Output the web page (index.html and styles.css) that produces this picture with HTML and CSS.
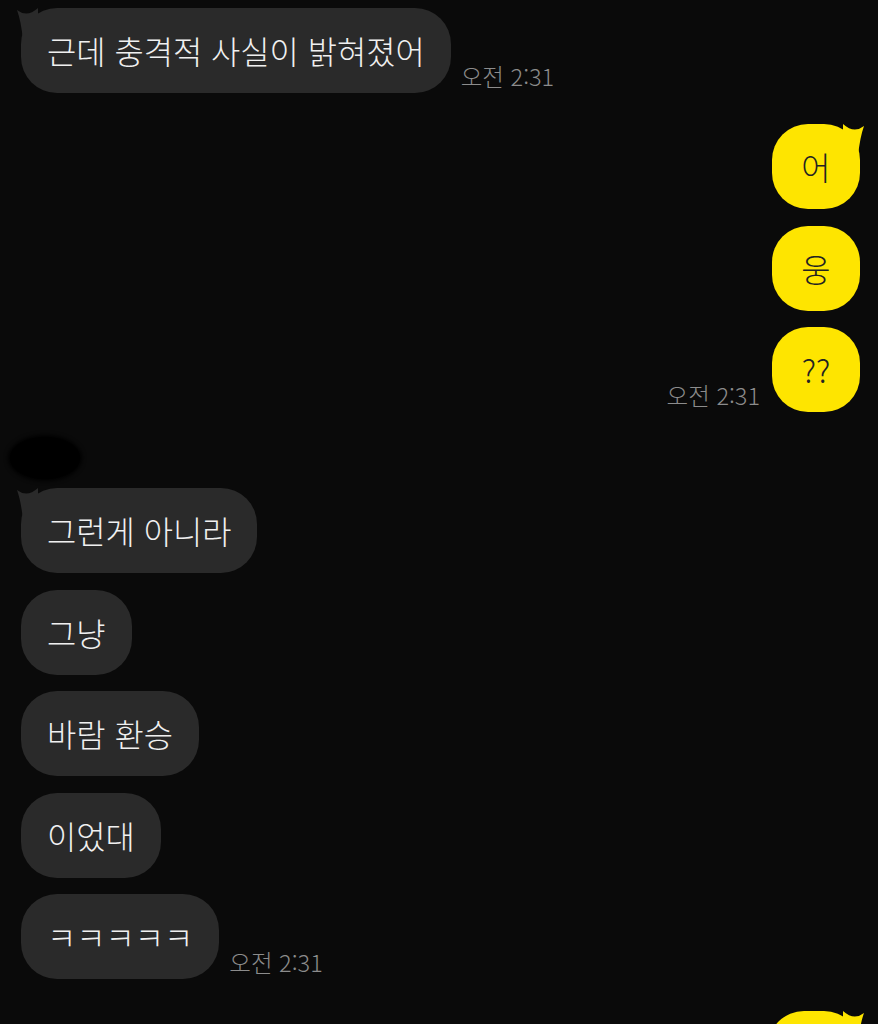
FILE: index.html
```html
<!DOCTYPE html>
<html lang="ko">
<head>
  <meta charset="UTF-8">
  <title>채팅</title>
  <link rel="stylesheet" href="styles.css">
</head>
<body>

  <div class="chat">

    <div class="row left">
      <div class="bubble gray">
        <svg class="tail" width="24" height="32" viewBox="0 0 24 32"><path d="M1 2 Q11 10 22 0 L22 32 L7 32 Q5 13 1 2 Z"/></svg>
        근데 충격적 사실이 밝혀졌어
      </div>
      <span class="time">오전 2:31</span>
    </div>

    <div class="group right first">
      <div class="row right">
        <div class="bubble yellow">
          <svg class="tail" width="24" height="32" viewBox="0 0 24 32"><path d="M23 2 Q13 10 2 0 L2 32 L17 32 Q19 13 23 2 Z"/></svg>
          어
        </div>
      </div>
      <div class="row right">
        <div class="bubble yellow">웅</div>
      </div>
      <div class="row right">
        <span class="time">오전 2:31</span>
        <div class="bubble yellow">??</div>
      </div>
    </div>

    <div class="sender">
      <div class="name-blur"></div>
    </div>

    <div class="group">
      <div class="row left">
        <div class="bubble gray">
          <svg class="tail" width="24" height="32" viewBox="0 0 24 32"><path d="M1 2 Q11 10 22 0 L22 32 L7 32 Q5 13 1 2 Z"/></svg>
          그런게 아니라
        </div>
      </div>
      <div class="row left">
        <div class="bubble gray">그냥</div>
      </div>
      <div class="row left">
        <div class="bubble gray">바람 환승</div>
      </div>
      <div class="row left">
        <div class="bubble gray">이었대</div>
      </div>
      <div class="row left">
        <div class="bubble gray">ㅋㅋㅋㅋㅋ</div>
        <span class="time">오전 2:31</span>
      </div>
    </div>

    <div class="group right last">
      <div class="row right">
        <div class="bubble yellow wide">
          <svg class="tail" width="24" height="32" viewBox="0 0 24 32"><path d="M23 2 Q13 10 2 0 L2 32 L17 32 Q19 13 23 2 Z"/></svg>
        </div>
      </div>
    </div>

  </div>

</body>
</html>
```
FILE: styles.css
```css
html, body {
  margin: 0;
  padding: 0;
  height: 100%;
  overflow: hidden;
  background: #0a0a0a;
  font-family: "Noto Sans CJK KR", "Noto Sans", sans-serif;
}

.chat {
  display: flex;
  flex-direction: column;
  padding: 8px 18px 0 21px;
}

.group {
  display: flex;
  flex-direction: column;
  gap: 16.5px;
}

.group.first {
  margin-top: 31px;
}

.group.last {
  margin-top: 32px;
}

.row {
  display: flex;
  align-items: flex-end;
}

.row.right {
  justify-content: flex-end;
}

.bubble {
  position: relative;
  box-sizing: border-box;
  min-width: 88px;
  height: 85px;
  padding: 21px 26px;
  border-radius: 36px;
  font-size: 31.8px;
  font-weight: 300;
  line-height: 43px;
  text-align: center;
  white-space: nowrap;
}

.bubble.wide {
  width: 92px;
}

.bubble.gray {
  background: #2a2a2a;
  color: #f0f0f0;
}

.bubble.yellow {
  background: #fee500;
  color: #222;
}

.tail {
  position: absolute;
  top: 0;
}

.gray .tail {
  left: -5px;
  fill: #2a2a2a;
}

.yellow .tail {
  right: -5px;
  fill: #fee500;
}

.time {
  font-size: 23.5px;
  font-weight: 300;
  line-height: 28px;
  color: #8c8c8c;
  margin-bottom: 3px;
  white-space: nowrap;
}

.left .time {
  margin-left: 10px;
}

.right .time {
  margin-right: 12px;
}

/* blurred sender name */
.sender {
  height: 76px;
  position: relative;
}

.name-blur {
  position: absolute;
  left: -11px;
  top: 25px;
  width: 70px;
  height: 42px;
  border-radius: 50%;
  background: #000;
  box-shadow: 0 0 4px 2px #000;
}
```
